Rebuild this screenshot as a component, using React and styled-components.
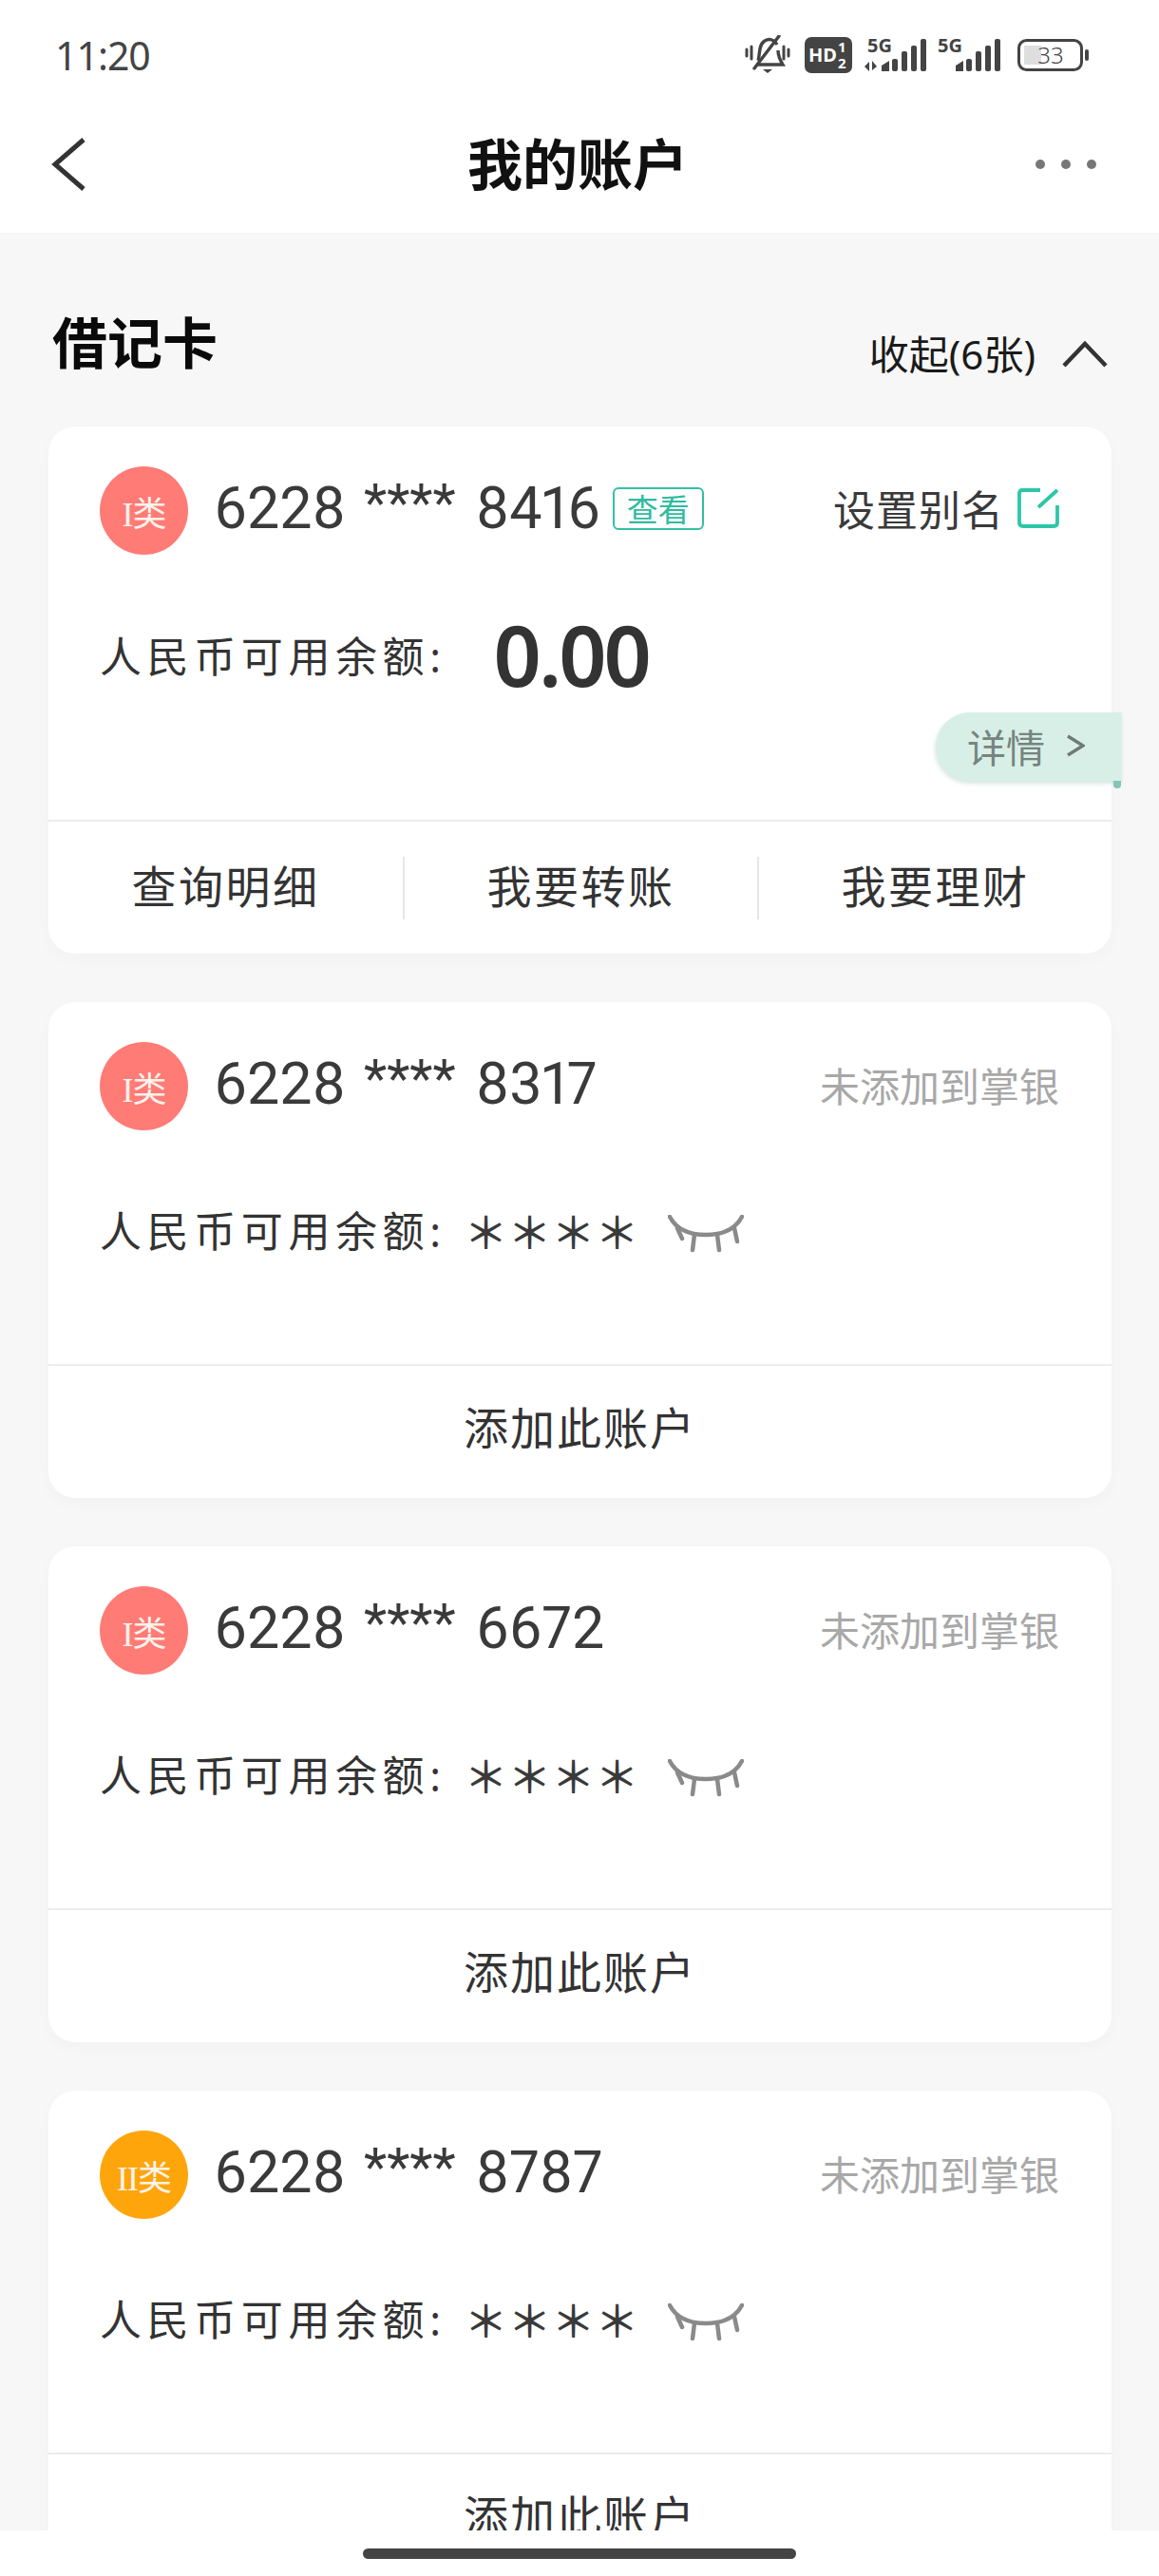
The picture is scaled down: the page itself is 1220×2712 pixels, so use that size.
import React from 'react'
import styled, { createGlobalStyle } from 'styled-components'

const Global = createGlobalStyle`
  html, body { margin: 0; padding: 0; background: #fff; }
  body { font-family: "Noto Sans", "Noto Sans CJK SC", sans-serif; color: #333; }
`

const Page = styled.div`
  width: 1220px;
  height: 2712px;
  display: flex;
  flex-direction: column;
  overflow: hidden;
  background: #f7f7f7;
`

/* top of the screen */
const Header = styled.header`
  height: 245px;
  flex: none;
  background: #fff;
  display: flex;
  flex-direction: column;
`
const StatusBar = styled.div`
  height: 116px;
  padding: 0 73px 0 58px;
  display: flex;
  justify-content: space-between;
  align-items: center;
  box-sizing: border-box;
`
const Time = styled.span`
  font-size: 41px;
  font-weight: 400;
  color: #444;
  letter-spacing: -1px;
`
const StatusIcons = styled.div`
  display: flex;
  align-items: center;
`
const NavBar = styled.div`
  flex: 1;
  display: grid;
  grid-template-columns: 1fr auto 1fr;
  align-items: center;
  padding: 0 65px 16px 54px;
`
const NavTitle = styled.h1`
  margin: 0 0 0 7px;
  font-size: 58px;
  font-weight: 700;
  color: #111;
  line-height: 1;
`
const NavEnd = styled.div`
  justify-self: end;
  display: flex;
`

const Content = styled.main`
  flex: 1;
  min-height: 0;
  overflow: hidden;
  padding: 0 50px 0 51px;
`
const SectionHead = styled.div`
  height: 204px;
  display: flex;
  justify-content: space-between;
  align-items: flex-start;
`
const SectionTitle = styled.h2`
  margin: 79px 0 0 4px;
  font-size: 58px;
  font-weight: 700;
  line-height: 74px;
  color: #0a0a0a;
`
const Collapse = styled.div`
  margin: 101px 4px 0 0;
  display: flex;
  align-items: center;
  gap: 28px;
  font-size: 42px;
  line-height: 54px;
  color: #1a1a1a;
`

const CardList = styled.div`
  display: flex;
  flex-direction: column;
  gap: 51px;
`
const CardBox = styled.section`
  position: relative;
  background: #fff;
  border-radius: 28px;
  box-shadow: 0 6px 18px rgba(0, 0, 0, 0.025);
`
const CardBody = styled.div`
  height: ${p => (p.$first ? 416 : 383)}px;
  padding: 42px 55px 0 54px;
  box-sizing: border-box;
  border-bottom: 2px solid #ececec;
`
const TopRow = styled.div`
  height: 93px;
  box-sizing: border-box;
  padding-bottom: 5px;
  display: flex;
  align-items: center;
`
const Badge = styled.div`
  width: 93px;
  height: 93px;
  flex: none;
  align-self: flex-start;
  border-radius: 50%;
  background: ${p => p.$color};
  color: #fff3ec;
  font-family: "Liberation Serif", "Noto Sans CJK SC", serif;
  font-size: 36px;
  display: flex;
  align-items: center;
  justify-content: center;
  letter-spacing: -1px;
`
const CardNumber = styled.span`
  margin-left: 27px;
  font-family: Roboto, "Noto Sans", sans-serif;
  font-size: 61px;
  font-variant-numeric: proportional-nums;
  color: #3a3a3a;
  line-height: 1;
  white-space: nowrap;
`
const Stars = styled.span`
  font-size: 56px;
  margin: 0 6px 0 4px;
  position: relative;
  top: -7px;
`
const ViewTag = styled.span`
  margin-left: 13px;
  width: 96px;
  height: 45px;
  box-sizing: border-box;
  border: 2px solid #35bfa4;
  border-radius: 6px;
  color: #2fbb9f;
  font-size: 33px;
  display: flex;
  align-items: center;
  justify-content: center;
`
const Alias = styled.div`
  margin-left: auto;
  display: flex;
  align-items: center;
  gap: 14px;
  font-size: 44px;
  letter-spacing: 1px;
  color: #3a3a3a;
`
const NotAdded = styled.span`
  margin-left: auto;
  font-size: 42px;
  color: #a8a8a8;
`
const BalanceRow = styled.div`
  margin-top: ${p => (p.$first ? 60 : 59)}px;
  height: 90px;
  display: flex;
  align-items: center;
`
const BalanceLabel = styled.span`
  font-size: 44px;
  letter-spacing: 5.6px;
  color: #333;
  white-space: nowrap;
`
const Amount = styled.span`
  margin-left: 50px;
  font-size: 88px;
  font-weight: 600;
  color: #333;
  letter-spacing: -3px;
`
const Hidden = styled.span`
  margin-left: 19px;
  font-family: "Noto Sans CJK SC", sans-serif;
  font-size: 46px;
  font-weight: 500;
  color: #3a3a3a;
  white-space: nowrap;
`
const EyeWrap = styled.span`
  margin: 10px 0 0 30px;
  display: flex;
`

const Actions = styled.div`
  height: 139px;
  display: grid;
  grid-template-columns: repeat(3, 1fr);
  align-items: center;
`
const Action = styled.div`
  height: 66px;
  box-sizing: border-box;
  padding-bottom: 9px;
  display: flex;
  align-items: center;
  justify-content: center;
  font-size: 47px;
  letter-spacing: 2.5px;
  color: #333;
  border-left: ${p => (p.$divided ? '2px solid #e6e6e6' : 'none')};
`
const SingleAction = styled.div`
  height: 139px;
  box-sizing: border-box;
  padding-bottom: 14px;
  display: flex;
  align-items: center;
  justify-content: center;
  font-size: 47px;
  letter-spacing: 2px;
  color: #333;
`

const Detail = styled.div`
  position: absolute;
  top: 301px;
  right: -11px;
  width: 196px;
  height: 72px;
  box-sizing: border-box;
  padding: 0 0 3px 33px;
  display: flex;
  align-items: center;
  gap: 22px;
  background: #d8efe7;
  border-radius: 40px 0 0 40px;
  box-shadow: -1px 3px 4px rgba(120, 170, 150, 0.28);
  color: #76847f;
  font-size: 41px;
  &::after {
    content: '';
    position: absolute;
    right: 1px;
    bottom: -8px;
    width: 8px;
    height: 8px;
    border-radius: 0 0 4px 4px;
    background: #86c5b5;
  }
`

const BottomBar = styled.div`
  height: 48px;
  flex: none;
  background: #fff;
  display: flex;
  justify-content: center;
  padding-top: 19px;
  box-sizing: border-box;
`
const HomeIndicator = styled.div`
  width: 456px;
  height: 11px;
  border-radius: 6px;
  background: #444;
`

const Bell = () => (
  <svg width="48" height="42" viewBox="0 0 48 42" fill="none" stroke="#444" strokeWidth="3.4">
    <path d="M14 27 C16 22 14 10 21 6 C26 3 31 5 34 10 M35 16 C35 20 37 26 40 31 H12" />
    <path d="M36 1 L10 35" strokeLinecap="round" />
    <path d="M19 36 H29 L24 40 Z" fill="#444" stroke="none" />
    <path d="M2 15 V22 M7 12 V25 M41 12 V25 M46 15 V22" strokeLinecap="round" strokeWidth="3" />
  </svg>
)

const HdIcon = () => (
  <svg width="50" height="38" viewBox="0 0 50 38" style={{ marginLeft: 15 }}>
    <rect width="50" height="38" rx="7" fill="#444" />
    <text x="4" y="26" fontSize="20" fontWeight="700" fill="#fff" fontFamily="Noto Sans">HD</text>
    <text x="35" y="16" fontSize="15" fontWeight="700" fill="#fff" fontFamily="Noto Sans">1</text>
    <text x="35" y="33" fontSize="15" fontWeight="700" fill="#fff" fontFamily="Noto Sans">2</text>
  </svg>
)

const Signal = ({ arrows, width, ml }) => (
  <svg width={width} height="48" viewBox={`${70 - width} 0 ${width} 48`} style={{ marginLeft: ml }}>
    <text x={arrows ? 4 : 0} y="21" fontSize="20" fontWeight="700" fill="#444" fontFamily="Noto Sans">5G</text>
    {arrows && <path d="M1 36 L6 31 V41 Z M9 30 V40 L14 36 Z" fill="#444" />}
    <path d="M19 41 V35 L27 30 V41 Z" fill="#444" />
    <rect x="30" y="28" width="6" height="13" rx="2" fill="#444" />
    <rect x="40" y="20" width="6" height="21" rx="2" fill="#444" />
    <rect x="50" y="14" width="6" height="27" rx="2" fill="#444" />
    <rect x="60" y="7" width="6" height="34" rx="2" fill="#444" />
  </svg>
)

const Battery = () => (
  <svg width="76" height="46" viewBox="0 0 76 46" style={{ marginLeft: 14 }}>
    <rect x="1.5" y="7.5" width="66" height="31" rx="8" fill="none" stroke="#444" strokeWidth="3" />
    <rect x="7" y="13" width="18" height="20" fill="#dedede" />
    <text x="35" y="31.5" fontSize="24" fontWeight="300" textAnchor="middle" fill="#444" fontFamily="Noto Sans">33</text>
    <rect x="71" y="17" width="4" height="12" rx="2" fill="#444" />
  </svg>
)

const BackIcon = () => (
  <svg width="36" height="56" viewBox="0 0 36 56" fill="none" stroke="#333" strokeWidth="5">
    <path d="M34 2 L4 28 L34 54" />
  </svg>
)

const MoreIcon = () => (
  <svg width="66" height="12" viewBox="0 0 66 12" fill="#777">
    <circle cx="6" cy="6" r="5" />
    <circle cx="33" cy="6" r="5" />
    <circle cx="60" cy="6" r="5" />
  </svg>
)

const UpIcon = () => (
  <svg width="48" height="28" viewBox="0 0 48 28" fill="none" stroke="#333" strokeWidth="4.5">
    <path d="M2 26 L24 3 L46 26" />
  </svg>
)

const EditIcon = () => (
  <svg width="44" height="42" viewBox="0 0 44 42" fill="none" stroke="#2dc6a8" strokeWidth="3.8">
    <path d="M24 2 H5 Q2 2 2 5 V36 Q2 40 6 40 H38 Q42 40 42 36 V18" />
    <path d="M42 2 L22 20" />
  </svg>
)

const RightIcon = () => (
  <svg width="20" height="24" viewBox="0 0 20 24" fill="none" stroke="#6d7a75" strokeWidth="3.4">
    <path d="M2 2 L18 12 L2 22" />
  </svg>
)

const EyeIcon = () => (
  <svg width="80" height="40" viewBox="0 0 80 40" fill="none" stroke="#8a8a8a" strokeWidth="4.5" strokeLinecap="round">
    <path d="M2 2 Q12 21 40 21 Q68 21 78 2" />
    <path d="M10 14 L15 25 M28 21 L26 37 M52 21 L54 37 M70 14 L73 28" />
  </svg>
)

const accounts = [
  { type: 'I类', color: '#ff7b76', tail: '8317' },
  { type: 'I类', color: '#ff7b76', tail: '6672' },
  { type: 'II类', color: '#ffa50c', tail: '8787' },
]

const App = () => {
  return (
    <Page>
      <Global />
      <Header>
        <StatusBar>
          <Time>11:20</Time>
          <StatusIcons>
            <Bell />
            <HdIcon />
            <Signal arrows width={70} ml={12} />
            <Signal width={70} ml={8} />
            <Battery />
          </StatusIcons>
        </StatusBar>
        <NavBar>
          <BackIcon />
          <NavTitle>我的账户</NavTitle>
          <NavEnd><MoreIcon /></NavEnd>
        </NavBar>
      </Header>

      <Content>
        <SectionHead>
          <SectionTitle>借记卡</SectionTitle>
          <Collapse>收起(6张)<UpIcon /></Collapse>
        </SectionHead>

        <CardList>
          {/* opened card */}
          <CardBox>
            <CardBody $first>
              <TopRow>
                <Badge $color="#ff7b76">I类</Badge>
                <CardNumber>6228 <Stars>****</Stars> 8416</CardNumber>
                <ViewTag>查看</ViewTag>
                <Alias>设置别名<EditIcon /></Alias>
              </TopRow>
              <BalanceRow $first>
                <BalanceLabel>人民币可用余额:</BalanceLabel>
                <Amount>0.00</Amount>
              </BalanceRow>
            </CardBody>
            <Detail>详情<RightIcon /></Detail>
            <Actions>
              <Action>查询明细</Action>
              <Action $divided>我要转账</Action>
              <Action $divided>我要理财</Action>
            </Actions>
          </CardBox>

          {accounts.map(a => (
            <CardBox key={a.tail}>
              <CardBody>
                <TopRow>
                  <Badge $color={a.color}>{a.type}</Badge>
                  <CardNumber>6228 <Stars>****</Stars> {a.tail}</CardNumber>
                  <NotAdded>未添加到掌银</NotAdded>
                </TopRow>
                <BalanceRow>
                  <BalanceLabel>人民币可用余额:</BalanceLabel>
                  <Hidden>＊＊＊＊</Hidden>
                  <EyeWrap><EyeIcon /></EyeWrap>
                </BalanceRow>
              </CardBody>
              <SingleAction>添加此账户</SingleAction>
            </CardBox>
          ))}
        </CardList>
      </Content>

      <BottomBar>
        <HomeIndicator />
      </BottomBar>
    </Page>
  )
}

export default App
